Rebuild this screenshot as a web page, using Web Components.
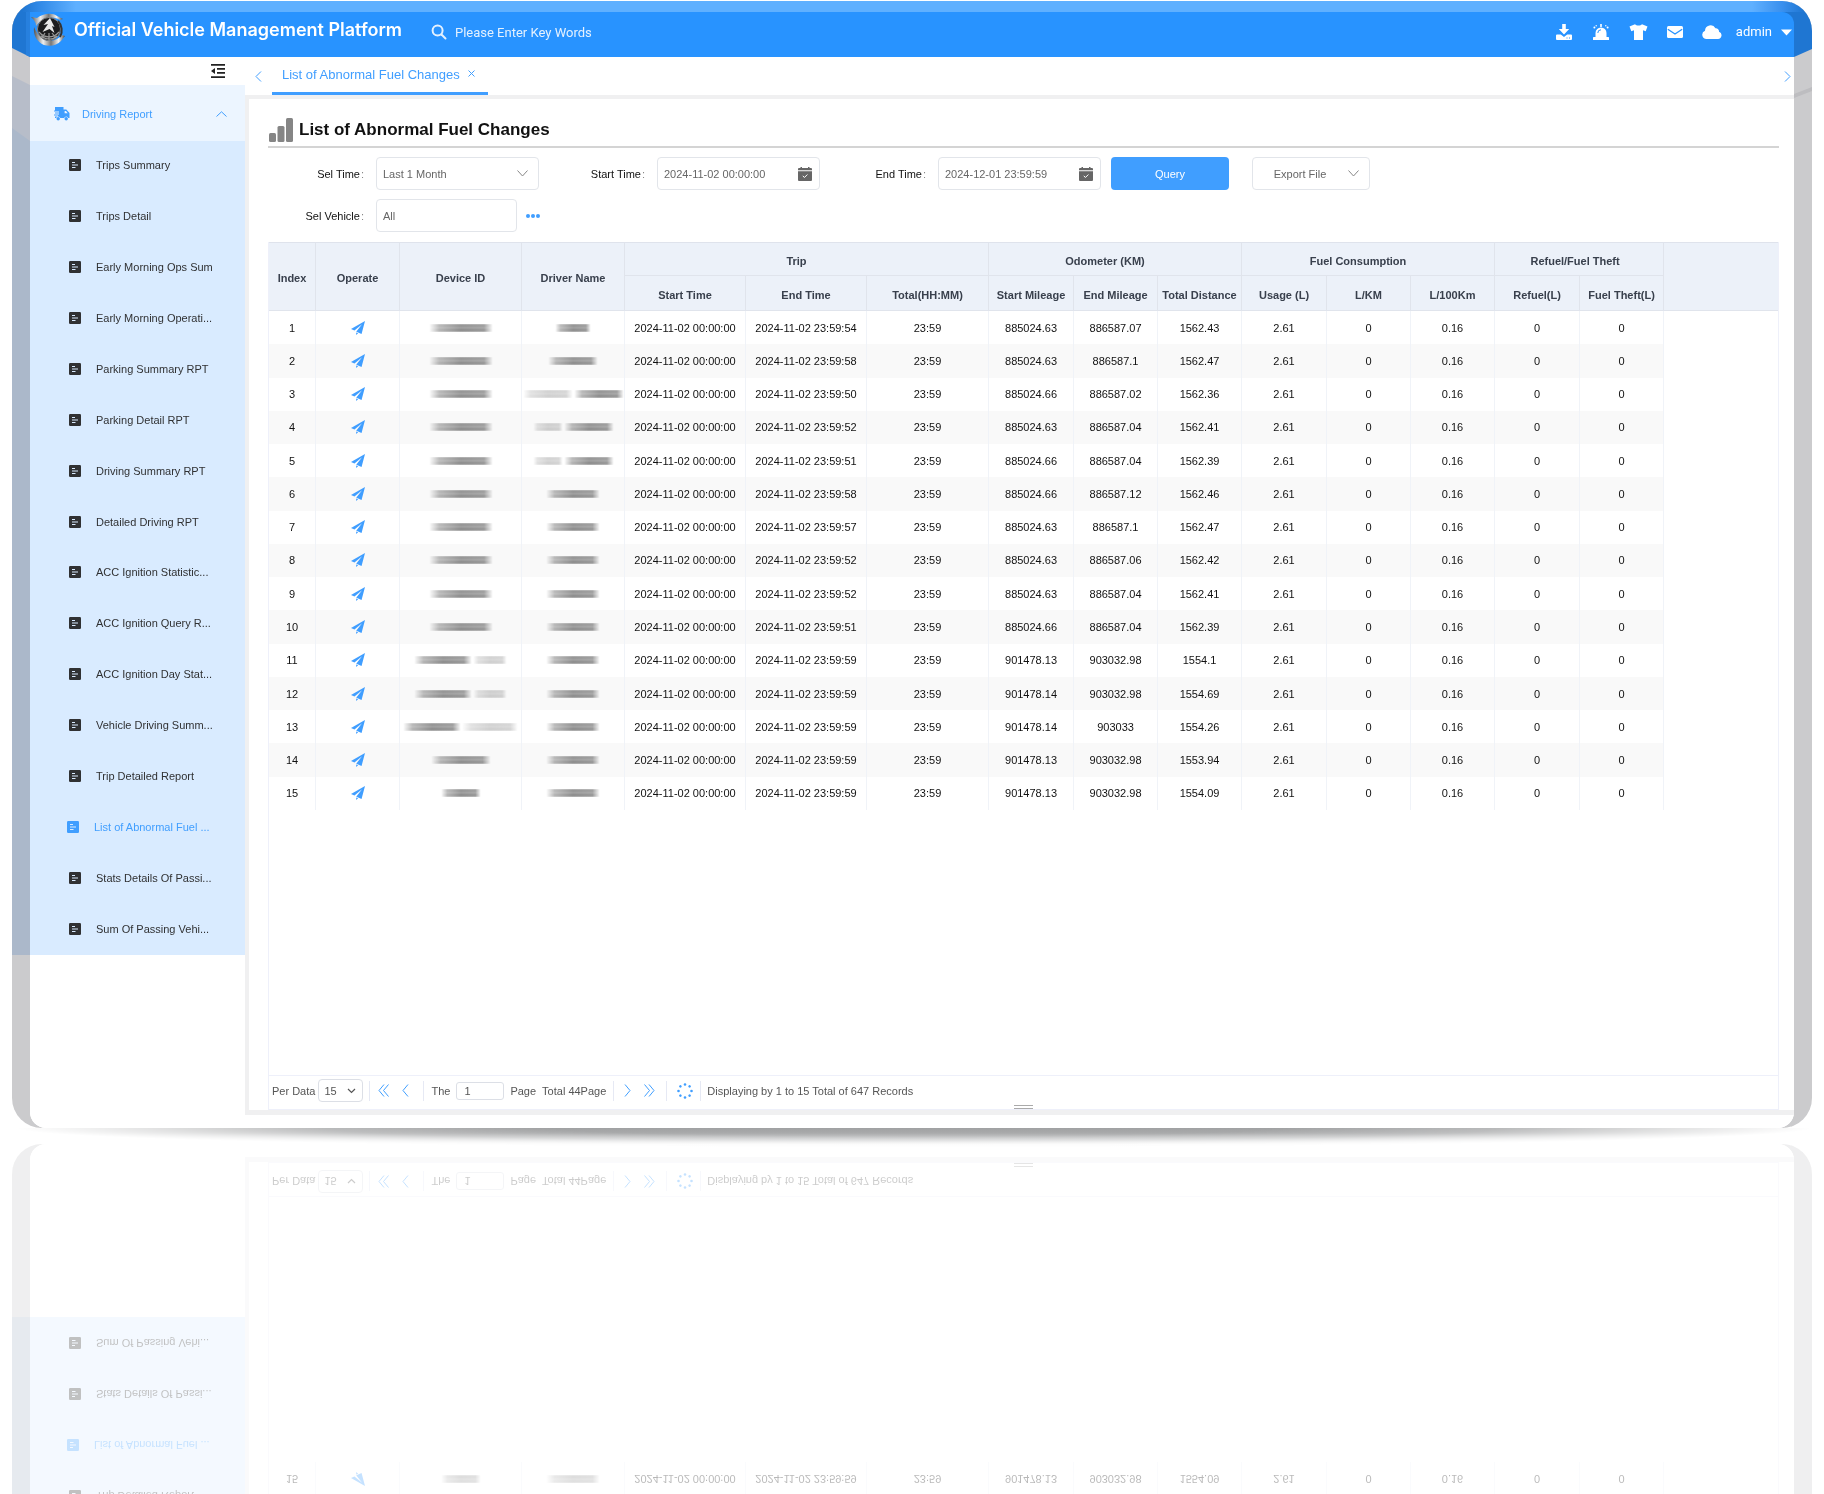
<!DOCTYPE html>
<html lang="en">
<head>
<meta charset="utf-8">
<title>Official Vehicle Management Platform</title>
<style>
  html, body { margin: 0; background: #fff; }
  body { height: 100vh; overflow: hidden; font: 11px/16px "Liberation Sans", Arial, sans-serif; color: #303133;
    --blue: #409eff; --line: #ebeef5; }
</style>
</head>
<body>
<app-stage>
  <app-header slot="header"></app-header>
  <side-menu slot="side"></side-menu>
  <tab-strip slot="tabs" label="List of Abnormal Fuel Changes"></tab-strip>
  <report-panel slot="content" heading="List of Abnormal Fuel Changes">
    <filter-bar slot="filters">
      <filter-field kind="select" label="Sel Time" value="Last 1 Month"></filter-field>
      <filter-field kind="date" label="Start Time" value="2024-11-02 00:00:00"></filter-field>
      <filter-field kind="date" label="End Time" value="2024-12-01 23:59:59"></filter-field>
      <action-buttons></action-buttons>
      <filter-field kind="picker" label="Sel Vehicle" value="All"></filter-field>
    </filter-bar>
    <fuel-table></fuel-table>
    <pager-bar slot="pager"></pager-bar>
  </report-panel>
</app-stage>

<script>
const RESET = `:host,*{box-sizing:border-box} svg{display:block} button,input,select{font:inherit;color:inherit;margin:0;padding:0;border:0;background:none;outline:0;border-radius:0} a{color:inherit;text-decoration:none}`;
const define = (name, html) => customElements.define(name, class extends HTMLElement {
  connectedCallback() {
    if (this.shadowRoot) return;
    this.attachShadow({ mode: 'open' }).innerHTML =
      typeof html === 'function' ? html(this) : html;
  }
});
const chevron = (d, w, h, sw = 1.2, c = 'currentColor') =>
  `<svg width="${w}" height="${h}" viewBox="0 0 ${w} ${h}" fill="none" stroke="${c}" stroke-width="${sw}" aria-hidden="true"><path d="${d}"/></svg>`;

/* Bevelled frame that holds the whole application, with its floor reflection */
define('app-stage', `
<style>${RESET}
:host{display:flex;flex-direction:column;min-height:100vh;padding:1px 12px 366px;position:relative;isolation:isolate}
.frame{flex:1;display:grid;grid-template-columns:18px minmax(0,1fr) 18px;grid-template-rows:11px minmax(0,1fr);border-radius:30px;overflow:hidden;background:#cbcbcd;position:relative;
 -webkit-box-reflect:below 16px linear-gradient(rgba(0,0,0,.3),rgba(0,0,0,.3))}
.bevel{grid-column:1/-1;background:linear-gradient(90deg,#1f76d2 10px,#2f88e6 26px,#5fb0ff 64px,#5fb0ff calc(100% - 60px),#3a90ee calc(100% - 30px),#1f76d2 calc(100% - 8px))}
.rail{overflow:hidden}
.inner{display:flex;flex-direction:column;min-width:0;background:linear-gradient(#1f76d2 45px,#cbcbcd 45px);border-radius:0 0 16px 16px}
.body{flex:1;display:flex;min-height:0;background:#fff;border-radius:0 0 16px 16px;overflow:hidden}
.main{flex:1;min-width:0;display:flex;flex-direction:column}
.shade{position:absolute;left:16px;right:12px;bottom:346px;height:20px;overflow:hidden;z-index:-1}
.shade i{display:block;height:100%;background:linear-gradient(#a0a1a2 0,#a9aaab 25%,#d0d1d2 55%,#f1f1f1 80%,#fff);
 -webkit-mask:radial-gradient(ellipse 50% 100% at 50% 0,#000 40%,rgba(0,0,0,.75) 65%,rgba(0,0,0,.3) 85%,transparent 100%)}
</style>
<div class="shade"><i></i></div>
<div class="frame">
  <div class="bevel"></div>
  <svg class="rail" width="18" height="100%" aria-hidden="true">
    <rect width="18" height="943" fill="#abb8ca"/>
    <polygon points="0,0 18,0 18,129 0,116" fill="#b7bdc9"/>
    <polygon points="0,0 18,0 18,73 0,64" fill="#c9c9cc"/>
    <polygon points="0,0 18,0 18,45 0,36" fill="#1f76d2"/>
    <polygon points="14,0 18,0 18,45 14,43" fill="#2780de"/>
  </svg>
  <div class="inner">
    <slot name="header"></slot>
    <div class="body"><slot name="side"></slot><div class="main"><slot name="tabs"></slot><slot name="content"></slot></div></div>
  </div>
  <svg class="rail" width="18" height="100%" aria-hidden="true">
    <polygon points="0,82 18,75 18,79 0,86" fill="#bdbdc0"/>
    <polygon points="0,0 18,0 18,37 0,45" fill="#1f76d2"/>
  </svg>
</div>`);

define('app-header', `
<style>${RESET}
:host{display:flex;align-items:center;height:45px;flex:none;padding:0 2px 5px 1px;background:#2893ff;color:#fff;border-radius:0 12px 0 0;font-family:Roboto,sans-serif;font-size:13px}
.logo{flex:none;margin:0 9px 5px 0}
h1{margin:0 29px 0 0;padding-bottom:5px;font:600 18px/24px Inter,sans-serif;white-space:nowrap}
label{display:flex;align-items:center;gap:8px;flex:1}
input{width:200px;height:20px}
input::placeholder{color:#e4f1ff;opacity:1}
nav{display:flex;align-items:center}
nav button{width:37px;height:20px;display:flex;align-items:center;justify-content:center}
nav .user{width:auto;gap:9px;margin-left:5px}
</style>
<svg class="logo" width="34" height="34" viewBox="0 0 34 34" aria-hidden="true">
  <defs><linearGradient id="m" x1="0" x2="1"><stop offset="0" stop-color="#555"/><stop offset=".3" stop-color="#eee"/><stop offset=".55" stop-color="#777"/><stop offset=".8" stop-color="#f4f4f4"/><stop offset="1" stop-color="#444"/></linearGradient></defs>
  <path d="M0 4l6 1C11 1 21-1 26 3l6 3-3 1C23 3 12 3 5 13c0-4-2-6-5-9z" fill="url(#m)"/>
  <path d="M3 14c-1 8 3 15 10 18 7 2 13 0 17-4l4-5-3-1c-5 6-14 8-20 3-3-2-6-6-8-11z" fill="url(#m)"/>
  <circle cx="18" cy="16" r="11.500" fill="#1c1c1e" stroke="#888"/>
  <path d="M19 5l4.500 9-2.500-1 2.500 7-5-4-7 3 5.500-8-4.500 1z" fill="#e8e8e8"/>
  <path d="M8 19c5 6 14 7 20 0M10 23c5 4 12 4 16 0M14 20l-3 5M21 20l4 5M18 20v7" stroke="#999" stroke-width="1.200" fill="none"/>
  <path d="M27 8c4 4 5 11 2 16" stroke="#333" stroke-width="2" fill="none"/>
</svg>
<h1>Official Vehicle Management Platform</h1>
<label><svg width="16" height="16" viewBox="0 0 16 16" fill="none" stroke="#e4f1ff" stroke-width="2" stroke-linecap="round" aria-hidden="true"><circle cx="6.6" cy="6.6" r="5"/><path d="M10.5 10.500l4 4"/></svg>
<input aria-label="Search" placeholder="Please Enter Key Words"></label>
<nav>
<button aria-label="Download"><svg width="16" height="16" viewBox="0 0 16 16" fill="#fff"><path d="M6.2 0h3.6v5h3.4L8 10.4 2.8 5h3.4z"/><path fill-rule="evenodd" d="M1 10.4h3.8L8 13l3.2-2.6H15a1 1 0 0 1 1 1V15a1 1 0 0 1-1 1H1a1 1 0 0 1-1-1v-3.600a1 1 0 0 1 1-1zM10.500 13.500v1h1v-1zM13 13.500v1h1v-1z"/></svg></button>
<button aria-label="Alarm"><svg width="16" height="16" viewBox="0 0 16 16" fill="#fff"><path d="M2.500 13V9a5.500 5.500 0 0 1 11 0v4z"/><rect y="13" width="16" height="3" rx=".6"/><rect x="7.200" width="1.600" height="3"/><circle cx="1.400" cy="3.600" r="1"/><circle cx="14.600" cy="3.600" r="1"/><circle cx="3.200" cy="1.800" r=".7"/><circle cx="12.800" cy="1.800" r=".7"/><path d="M4.800 9A3.200 3.200 0 0 1 8 5.800" stroke="#2893ff" fill="none"/></svg></button>
<button aria-label="Theme"><svg width="19" height="16" viewBox="0 0 19 16" fill="#fff"><path d="M6 .3c1.200 1.700 5.800 1.700 7 0l5.500 2.200-1.800 4.700-2.700-1V16H5V6.200l-2.700 1L.5 2.500z"/></svg></button>
<button aria-label="Mail"><svg width="16" height="12" viewBox="0 0 16 12"><rect width="16" height="12" rx="1.500" fill="#fff"/><path d="M.8 3.200L8 8l7.200-4.800" stroke="#2893ff" stroke-width="1.300" fill="none"/></svg></button>
<button aria-label="Cloud"><svg width="20" height="14" viewBox="0 0 20 14" fill="#fff"><path d="M4.500 14A4.300 4.300 0 0 1 3 5.700 5.600 5.600 0 0 1 13.500 3.200 3.200 3.200 0 0 1 17 6.800 3.700 3.700 0 0 1 16 14z"/></svg></button>
<button class="user">admin <svg width="11" height="7" viewBox="0 0 11 7"><path d="M0 .5h11L5.500 6.500z" fill="#fff"/></svg></button>
</nav>`);

const REPORTS = ['Trips Summary','Trips Detail','Early Morning Ops Sum','Early Morning Operati...','Parking Summary RPT','Parking Detail RPT','Driving Summary RPT','Detailed Driving RPT','ACC Ignition Statistic...','ACC Ignition Query R...','ACC Ignition Day Stat...','Vehicle Driving Summ...','Trip Detailed Report','List of Abnormal Fuel ...','Stats Details Of Passi...','Sum Of Passing Vehi...'];
define('side-menu', `
<style>${RESET}
:host{display:block;width:215px;flex:none;background:#fff}
.fold{height:28px;display:flex;justify-content:flex-end;padding:0 20px 0 0;align-items:center}
.group{width:100%;height:56px;display:flex;align-items:center;padding:2px 18px 0 24px;gap:12px;background:#ecf5ff;color:var(--blue);text-align:left}
.group span{flex:1}
ul{list-style:none;margin:0;padding:0;height:814px;display:grid;grid-auto-rows:1fr;background:#d9ebff}
a{display:flex;height:100%;align-items:center;padding:0 0 2px 39px;gap:15px}
a.on{color:var(--blue);padding-left:37px}
</style>
<div class="fold"><button aria-label="Collapse menu"><svg width="14" height="14" viewBox="0 0 14 14" fill="#222"><path d="M0 0h14v1.800H0zM6 4h8v1.800H6zM6 8h8v1.800H6zM0 12.200h14V14H0zM0 7l4-3v6z"/></svg></button></div>
<button class="group"><svg width="16" height="14" viewBox="0 0 16 14" fill="#409eff"><path d="M1 0h8.500v2.500h2.800L15.500 6v5h-1.200a2.200 2.200 0 0 0-4.200 0H6.300a2.200 2.200 0 0 0-4.200 0H1V9.500h3v-1H0v-1h5v-1H1v-1h4v-1H0v-1h1z"/><circle cx="4.200" cy="11.800" r="1.700"/><circle cx="12.200" cy="11.800" r="1.700"/><path d="M10.600 4h1.400l1.700 2.200h-3.100z" fill="#ecf5ff"/></svg><span>Driving Report</span>${chevron('M.5 5.500L5.500 .8L10.500 5.500', 11, 6, 1)}</button>
<ul>${REPORTS.map((t, i) => `<li><a href="#"${i === 13 ? ' class="on"' : ''}><svg width="12" height="12" viewBox="0 0 12 12" aria-hidden="true"><rect width="12" height="12" rx="1.200" fill="currentColor"/><path d="M3 3.500h3M3 6h6M3 8.500h3.500" stroke="#d9ebff" stroke-width="1.200"/></svg>${t}</a></li>`).join('')}</ul>`);

define('tab-strip', el => `
<style>${RESET}
:host{display:flex;height:38px;background:#fff;align-items:stretch;color:var(--blue);font-size:13px;padding-right:2px;flex:none}
.arrow{width:27px;display:flex;align-items:center;justify-content:center}
.arrow:last-child{width:10px;margin-left:auto}
.tab{display:flex;align-items:center;gap:8px;padding:0 13px 0 10px;border-bottom:3px solid var(--blue)}
.tab button{padding-bottom:2px}
</style>
<button class="arrow" aria-label="Previous tab">${chevron('M6 .5L1 5.500L6 10.500', 7, 11, 1)}</button>
<div class="tab"><a href="#">${el.getAttribute('label')}</a><button aria-label="Close tab">${chevron('M.5 .5L6.500 6.500M6.500 .5L.5 6.500', 7, 7, 1)}</button></div>
<button class="arrow" aria-label="Next tab">${chevron('M1 .5L6 5.500L1 10.500', 7, 11, 1)}</button>`);

define('report-panel', el => `
<style>${RESET}
:host{flex:1;display:flex;flex-direction:column;min-height:0;background:#f0f0f1;padding:4px 0 5px 4px;border-bottom:13px solid #fff}
.sheet{flex:1;display:flex;flex-direction:column;background:#fff;padding:0 15px 0 19px;position:relative}
h2{margin:0;height:49px;padding-top:14px;display:flex;align-items:center;gap:6px;font-size:17px;line-height:24px;color:#111;border-bottom:2px solid #d4d4d4}
.grid{flex:1;border:1px solid #eef0fa;border-top:0}
.grip{position:absolute;left:50%;bottom:1px;width:19px;height:4px;border:solid #aaa;border-width:1px 0;margin-left:-8px}
</style>
<div class="sheet">
<h2><svg width="25" height="24" viewBox="0 0 25 24" fill="#858585" aria-hidden="true"><rect x="1" y="15" width="7" height="9" rx="1.500"/><rect x="9.500" y="8" width="7" height="16" rx="1.500"/><rect x="18" width="7" height="24" rx="1.500"/></svg>${el.getAttribute('heading')}</h2>
<slot name="filters"></slot>
<div class="grid"><slot></slot></div>
<slot name="pager"></slot>
<div class="grip"></div>
</div>`);

define('filter-bar', `
<style>:host{display:grid;grid-template-columns:repeat(3,271px) 1fr;gap:9px 10px;padding:9px 0 10px}</style><slot></slot>`);

const calendar = `<svg width="14" height="14" viewBox="0 0 14 14" aria-hidden="true"><path d="M1 1h1.500V0h1.500v1h6V0h1.500v1H13a1 1 0 0 1 1 1v1.300H0V2a1 1 0 0 1 1-1zM0 4.300h14V13a1 1 0 0 1-1 1H1a1 1 0 0 1-1-1z" fill="#666"/><path d="M4.800 8.800l1.600 1.700 3-3" stroke="#fff" fill="none"/></svg>`;
define('filter-field', el => {
  const kind = el.getAttribute('kind'), v = el.getAttribute('value');
  const control = kind === 'select'
    ? `<select id="c"><option>${v}</option></select>${chevron('M.5 .5L5.500 6L10.500 .5', 11, 7, 1, '#888')}`
    : `<input id="c" value="${v}">${kind === 'date' ? calendar : ''}`;
  return `
<style>${RESET}
:host{display:flex;align-items:center;height:33px}
label{width:96px;text-align:right;color:#111;margin-right:12px;flex:none}
label::after{content:":";color:#888;margin-left:1px}
.box{flex:1;height:33px;position:relative;display:flex;align-items:center;border:1px solid #e2e5ea;border-radius:4px;color:#666;padding:0 7px 0 6px}
.box.select{padding-right:10px}
.box.picker{flex:0 0 141px}
select,input{flex:1;width:0;height:31px;appearance:none}
.more{display:flex;gap:1px;margin-left:9px}
.more i{width:4px;height:4px;border-radius:50%;background:var(--blue)}
</style>
<label for="c">${el.getAttribute('label')}</label><div class="box ${kind}">${control}</div>
${kind === 'picker' ? '<button class="more" aria-label="More"><i></i><i></i><i></i></button>' : ''}`;
});

define('action-buttons', `
<style>${RESET}
:host{display:flex;gap:23px}
button{width:118px;height:33px;border-radius:4px;display:flex;align-items:center;justify-content:center}
.query{background:var(--blue);color:#fff}
.export{border:1px solid #e2e5ea;color:#666;gap:22px;padding-left:11px}
</style><button class="query">Query</button><button class="export">Export File ${chevron('M.5 .5L5.500 6L10.500 .5', 11, 7, 1, '#888')}</button>`);

const ROWS = [
 ['54','885024.63','886587.07','1562.43'],['58','885024.63','886587.1','1562.47'],['50','885024.66','886587.02','1562.36'],
 ['52','885024.63','886587.04','1562.41'],['51','885024.66','886587.04','1562.39'],['58','885024.66','886587.12','1562.46'],
 ['57','885024.63','886587.1','1562.47'],['52','885024.63','886587.06','1562.42'],['52','885024.63','886587.04','1562.41'],
 ['51','885024.66','886587.04','1562.39'],['59','901478.13','903032.98','1554.1'],['59','901478.14','903032.98','1554.69'],
 ['59','901478.14','903033','1554.26'],['59','901478.13','903032.98','1553.94'],['59','901478.13','903032.98','1554.09']];
/* Masked identity: widths of the dark and light smears, light ones negative */
const DEVICE = { 11: [58, -34], 12: [58, -34], 13: [58, -56], 14: [60], 15: [40] };
const DRIVER = { 1: [36], 2: [50], 3: [-50, 50], 4: [-30, 50], 5: [-30, 50] };
const smears = list => `<div class="mask">${list.map(w => `<i class="${w < 0 ? 'pale' : ''}" style="width:${Math.abs(w)}px"></i>`).join('')}</div>`;
define('fuel-table', `
<style>${RESET}
:host{display:block}
table{width:100%;height:568px;table-layout:fixed;border-collapse:separate;border-spacing:0;text-align:center;color:#111}
th{height:34px;padding:3px 0 0;background:#ecf1f9;color:#39404d;border:solid #e0e4ec;border-width:0 1px 1px 0;white-space:nowrap}
thead tr:first-child th{border-top:1px solid #dfe3ec}
thead tr:last-child th{height:35px}
th.wide{padding-right:20px}
th.pair{padding-right:8px}
th:last-child.end{border-right:0}
td{padding:0;border-right:1px solid #f0f3f8}
tbody tr:nth-child(even) td{background:#f9f9f9}
td button{display:block;margin:0 auto}
.mask{display:flex;justify-content:center;gap:1px}
.mask i{height:8px;background:repeating-linear-gradient(#808080 0 2px,#a4a4a4 2px 5px,#888 5px 6px);filter:blur(1px);-webkit-mask:linear-gradient(90deg,transparent,rgba(0,0,0,.65) 16%,#000 50%,rgba(0,0,0,.9) 86%,transparent)}
.mask .pale{opacity:.42}
</style>
<table>
<colgroup>${[47,84,122,103,121,121,122,85,84,84,85,84,84,85,84].map(w => `<col style="width:${w}px">`).join('')}<col></colgroup>
<thead><tr><th rowspan="2">Index</th><th rowspan="2">Operate</th><th rowspan="2">Device ID</th><th rowspan="2">Driver Name</th><th colspan="3" class="wide">Trip</th><th colspan="3" class="wide">Odometer (KM)</th><th colspan="3" class="wide">Fuel Consumption</th><th colspan="2" class="pair">Refuel/Fuel Theft</th><th rowspan="2" class="end"></th></tr>
<tr>${['Start Time','End Time','Total(HH:MM)','Start Mileage','End Mileage','Total Distance','Usage (L)','L/KM','L/100Km','Refuel(L)','Fuel Theft(L)'].map(t => `<th>${t}</th>`).join('')}</tr></thead>
<tbody>${ROWS.map((r, i) => { const n = i + 1; return `<tr><td>${n}</td><td><button aria-label="Locate"><svg width="14" height="14" viewBox="0 0 13 13" fill="#409eff"><path d="M13 0L0 7.400l3.200 1.500L10.300 3 5 9.800v.1l4.800 2.100zM4.800 10.600V13l1.800-1.700z"/></svg></button></td><td>${smears(DEVICE[n] || [64])}</td><td>${smears(DRIVER[n] || [54])}</td><td>2024-11-02 00:00:00</td><td>2024-11-02 23:59:${r[0]}</td><td>23:59</td><td>${r[1]}</td><td>${r[2]}</td><td>${r[3]}</td><td>2.61</td><td>0</td><td>0.16</td><td>0</td><td>0</td></tr>`; }).join('')}</tbody>
</table>`);

define('pager-bar', `
<style>${RESET}
:host{display:flex;align-items:center;height:34px;flex:none;padding:0 0 4px 3px;border:solid #eef0fa;border-width:0 1px 1px;color:#555}
.size{display:flex;align-items:center;gap:3px}
.pick{position:relative;display:flex;align-items:center}
select{appearance:none;width:45px;height:23px;border:1px solid #dcdfe6;border-radius:4px;padding-left:5px}
.pick svg{position:absolute;right:7px;pointer-events:none}
hr{width:1px;height:20px;border:0;margin:0;background:#e6e9f4}
.nav{display:flex;align-items:center;gap:13px;color:var(--blue);padding:0 14px 0 8px}
.nav.next{padding:0 11px 0 10px}
.size + hr{margin-left:6px}
.page{display:flex;align-items:center;padding:0 7px}
input{width:48px;height:18px;border:1px solid #dcdfe6;border-radius:3px;margin:0 6px;padding-left:7px}
.total{margin-left:6px}
.spin{padding:0 7px 0 10px}
.info{padding-left:6px}
</style>
<label class="size">Per Data <span class="pick"><select><option>15</option></select>${chevron('M1 1L4.500 4.500L8 1', 9, 6, 1.2)}</span></label>
<hr>
<div class="nav"><button aria-label="First page">${chevron('M6 .5L1 6.500L6 12.500M10.500 .5L5.500 6.500L10.500 12.500', 11, 13, 1)}</button><button aria-label="Previous page">${chevron('M6 .5L1 6.500L6 12.500', 7, 13, 1)}</button></div>
<hr>
<div class="page"><label for="p">The</label><input id="p" value="1"><span>Page</span><span class="total">Total 44Page</span></div>
<hr>
<div class="nav next"><button aria-label="Next page">${chevron('M1 .5L6 6.500L1 12.500', 7, 13, 1)}</button><button aria-label="Last page">${chevron('M.5 .5L5.500 6.500L.5 12.500M5 .5L10 6.500L5 12.500', 11, 13, 1)}</button></div>
<hr>
<button class="spin" aria-label="Refresh"><svg width="16" height="16" viewBox="0 0 16 16" fill="#409eff">${[0,45,90,135,180,225,270,315].map(a => `<circle cx="8" cy="1.500" r="1.300" transform="rotate(${a} 8 8)"/>`).join('')}</svg></button>
<hr>
<span class="info">Displaying by 1 to 15 Total of 647 Records</span>`);
</script>
</body>
</html>
